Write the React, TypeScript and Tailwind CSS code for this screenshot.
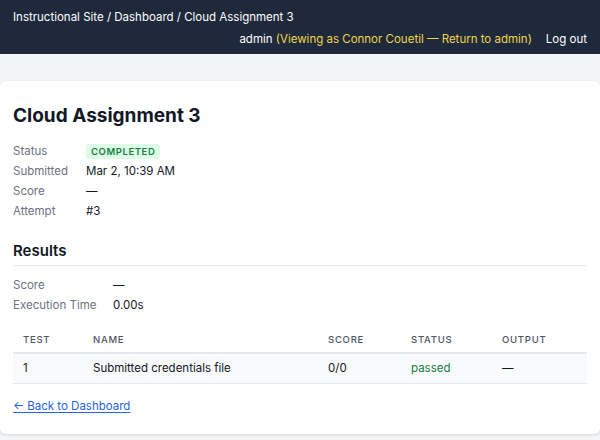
const fields = [
  { label: "Submitted", value: "Mar 2, 10:39 AM" },
  { label: "Score", value: "—" },
  { label: "Attempt", value: "#3" },
];

export default function App() {
  return (
    <div className="min-h-[440px] bg-[#f3f4f6] font-['Inter',sans-serif] text-[11.5px] text-[#111827]">
      <header className="bg-[#1e293b] px-[13px] pt-[6px] pb-[4px] text-[11.5px] text-white">
        <div className="h-[22px] leading-[22px]">Instructional Site / Dashboard / Cloud Assignment 3</div>
        <div className="flex h-[22px] items-center justify-end gap-[14px] leading-[22px]">
          <span>
            admin <span className="text-[#f1d54a]">(Viewing as Connor Couetil — Return to admin)</span>
          </span>
          <span>Log out</span>
        </div>
      </header>

      <main className="pt-[27px]">
        <div className="rounded-md bg-white px-[13px] pt-[21px] pb-[18px] shadow-[0_1px_3px_rgba(0,0,0,0.12)]">
          <h1 className="text-[19px] leading-[28px] font-bold">Cloud Assignment 3</h1>

          <dl className="mt-[12px]">
            <div className="flex h-[20px] items-center">
              <dt className="w-[73px] text-[#6b7280]">Status</dt>
              <dd>
                <span className="rounded-[3px] bg-[#dcfce7] px-[5px] py-[2px] text-[9.5px] font-semibold tracking-[0.06em] text-[#15803d]">
                  COMPLETED
                </span>
              </dd>
            </div>
            {fields.map((f) => (
              <div key={f.label} className="flex h-[20px] items-center">
                <dt className="w-[73px] text-[#6b7280]">{f.label}</dt>
                <dd>{f.value}</dd>
              </div>
            ))}
          </dl>

          <h2 className="mt-[17px] border-b border-[#e5e7eb] pb-[2px] text-[15px] leading-[24px] font-semibold">Results</h2>

          <dl className="mt-[10px]">
            <div className="flex h-[20px] items-center">
              <dt className="w-[100px] text-[#6b7280]">Score</dt>
              <dd>—</dd>
            </div>
            <div className="flex h-[20px] items-center">
              <dt className="w-[100px] text-[#6b7280]">Execution Time</dt>
              <dd>0.00s</dd>
            </div>
          </dl>

          <table className="mt-[12px] w-full border-collapse text-left">
            <thead>
              <tr className="border-b-2 border-[#e5e7eb]">
                <th className="w-[70px] px-[10px] py-[5px] text-[9.5px] font-medium tracking-[0.08em] text-[#4b5563]">TEST</th>
                <th className="w-[235px] px-[10px] py-[5px] text-[9.5px] font-medium tracking-[0.08em] text-[#4b5563]">NAME</th>
                <th className="w-[83px] px-[10px] py-[5px] text-[9.5px] font-medium tracking-[0.08em] text-[#4b5563]">SCORE</th>
                <th className="w-[91px] px-[10px] py-[5px] text-[9.5px] font-medium tracking-[0.08em] text-[#4b5563]">STATUS</th>
                <th className="px-[10px] py-[5px] text-[9.5px] font-medium tracking-[0.08em] text-[#4b5563]">OUTPUT</th>
              </tr>
            </thead>
            <tbody>
              <tr className="h-[30px] border-b border-[#e5e7eb] bg-[#f9fafb]">
                <td className="px-[10px]">1</td>
                <td className="px-[10px]">Submitted credentials file</td>
                <td className="px-[10px]">0/0</td>
                <td className="px-[10px] text-[#15803d]">passed</td>
                <td className="px-[10px]">—</td>
              </tr>
            </tbody>
          </table>

          <a href="#" className="mt-[12px] block h-[20px] leading-[20px] text-[#2563eb] underline underline-offset-2">
            ← Back to Dashboard
          </a>
        </div>
      </main>
    </div>
  );
}
